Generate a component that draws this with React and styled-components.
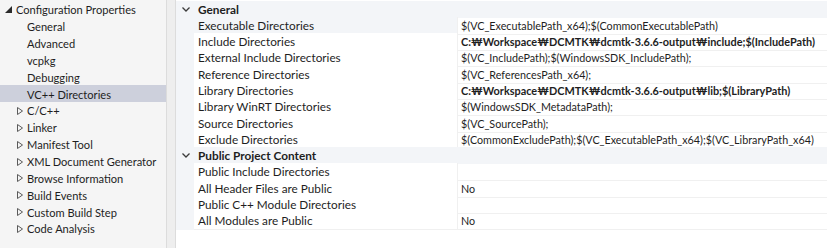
import React from 'react';
import styled, { createGlobalStyle } from 'styled-components';

const FONT = 'Lato, "Noto Sans", sans-serif';
const ROW_H = '16.3px';
const HEAD_BG = '#f3f5f8';

const GlobalStyle = createGlobalStyle`
  html, body {
    margin: 0;
    padding: 0;
    background: #ffffff;
  }
  body {
    font-family: ${FONT};
    font-size: 12px;
    color: #1e1e1e;
  }
`;

const Page = styled.div`
  display: flex;
  width: 827px;
  height: 248px;
  overflow: hidden;
`;

const Tree = styled.div`
  width: 166px;
  padding-top: 1px;
  background: #f5f5f5;
  border-right: 1px solid #dcdcdc;
  display: flex;
  flex-direction: column;
  font-size: 11.1px;
`;

const TreeRow = styled.div`
  height: 16.85px;
  display: flex;
  align-items: center;
  padding-left: ${p => p.$indent}px;
  padding-top: 1px;
  box-sizing: border-box;
  background: ${p => (p.$selected ? '#cdd0dc' : 'transparent')};
  white-space: nowrap;
`;

const Glyph = styled.span`
  width: ${p => p.$w}px;
  display: flex;
  align-items: center;
  flex-shrink: 0;
`;

const Splitter = styled.div`
  width: 8px;
  background: #eeeeee;
  border-right: 1px solid #dcdcdc;
`;

const Grid = styled.div`
  flex: 1;
  display: flex;
  flex-direction: column;
  padding-top: 0.5px;
  background: #ffffff;
`;

const Row = styled.div`
  display: grid;
  grid-template-columns: 18px 263px 1fr;
  height: ${ROW_H};
  line-height: 17px;
  white-space: nowrap;
`;

const Gutter = styled.div`
  background: ${HEAD_BG};
  display: flex;
  align-items: center;
  padding-left: 6px;
`;

const HeadTitle = styled.div`
  grid-column: 2 / 4;
  background: ${HEAD_BG};
  font-weight: 700;
  font-size: 11.8px;
  padding-left: 4px;
`;

const Label = styled.div`
  padding-left: 4px;
  font-size: 11.75px;
  background: ${p => (p.$hover ? HEAD_BG : '#ffffff')};
  border-bottom: 1px solid #f0f0f0;
  box-sizing: border-box;
`;

const Value = styled.div`
  padding-left: 3px;
  font-size: ${p => (p.$bold ? '10.9px' : '10.75px')};
  border-left: 1px solid #f0f0f0;
  border-bottom: 1px solid #f0f0f0;
  box-sizing: border-box;
  font-weight: ${p => (p.$bold ? 700 : 400)};
  overflow: hidden;
`;

const Expanded = () => (
  <svg width="7" height="7" viewBox="0 0 7 7">
    <polygon points="7,0 7,7 0,7" fill="#2b2b2b" />
  </svg>
);

const Collapsed = () => (
  <svg width="6" height="8" viewBox="0 0 6 8">
    <polygon points="0.5,0.5 5.5,4 0.5,7.5" fill="none" stroke="#5a5a5a" strokeWidth="1" />
  </svg>
);

const Chevron = () => (
  <svg width="8" height="5" viewBox="0 0 8 5">
    <polyline points="0.5,0.5 4,4 7.5,0.5" fill="none" stroke="#3c3c3c" strokeWidth="1.3" />
  </svg>
);

const treeItems = [
  { text: 'General' },
  { text: 'Advanced' },
  { text: 'vcpkg' },
  { text: 'Debugging' },
  { text: 'VC++ Directories', selected: true },
  { text: 'C/C++', folder: true },
  { text: 'Linker', folder: true },
  { text: 'Manifest Tool', folder: true },
  { text: 'XML Document Generator', folder: true },
  { text: 'Browse Information', folder: true },
  { text: 'Build Events', folder: true },
  { text: 'Custom Build Step', folder: true },
  { text: 'Code Analysis', folder: true },
];

const sections = [
  {
    title: 'General',
    rows: [
      ['Executable Directories', '$(VC_ExecutablePath_x64);$(CommonExecutablePath)', false, true],
      ['Include Directories', 'C:\u20A9Workspace\u20A9DCMTK\u20A9dcmtk-3.6.6-output\u20A9include;$(IncludePath)', true],
      ['External Include Directories', '$(VC_IncludePath);$(WindowsSDK_IncludePath);'],
      ['Reference Directories', '$(VC_ReferencesPath_x64);'],
      ['Library Directories', 'C:\u20A9Workspace\u20A9DCMTK\u20A9dcmtk-3.6.6-output\u20A9lib;$(LibraryPath)', true],
      ['Library WinRT Directories', '$(WindowsSDK_MetadataPath);'],
      ['Source Directories', '$(VC_SourcePath);'],
      ['Exclude Directories', '$(CommonExcludePath);$(VC_ExecutablePath_x64);$(VC_LibraryPath_x64)'],
    ],
  },
  {
    title: 'Public Project Content',
    rows: [
      ['Public Include Directories', ''],
      ['All Header Files are Public', 'No'],
      ['Public C++ Module Directories', ''],
      ['All Modules are Public', 'No'],
    ],
  },
];

function App() {
  return (
    <>
      <GlobalStyle />
      <Page>
        <Tree>
          <TreeRow $indent={5}>
            <Glyph $w={11}><Expanded /></Glyph>
            Configuration Properties
          </TreeRow>
          {treeItems.map(item => (
            <TreeRow key={item.text} $indent={17} $selected={item.selected}>
              <Glyph $w={10}>{item.folder && <Collapsed />}</Glyph>
              {item.text}
            </TreeRow>
          ))}
        </Tree>
        <Splitter />
        <Grid>
          {sections.map(sec => (
            <React.Fragment key={sec.title}>
              <Row>
                <Gutter><Chevron /></Gutter>
                <HeadTitle>{sec.title}</HeadTitle>
              </Row>
              {sec.rows.map(([label, value, bold, hover]) => (
                <Row key={label}>
                  <Gutter />
                  <Label $hover={hover}>{label}</Label>
                  <Value $bold={bold}>{value}</Value>
                </Row>
              ))}
            </React.Fragment>
          ))}
        </Grid>
      </Page>
    </>
  );
}

export default App;
